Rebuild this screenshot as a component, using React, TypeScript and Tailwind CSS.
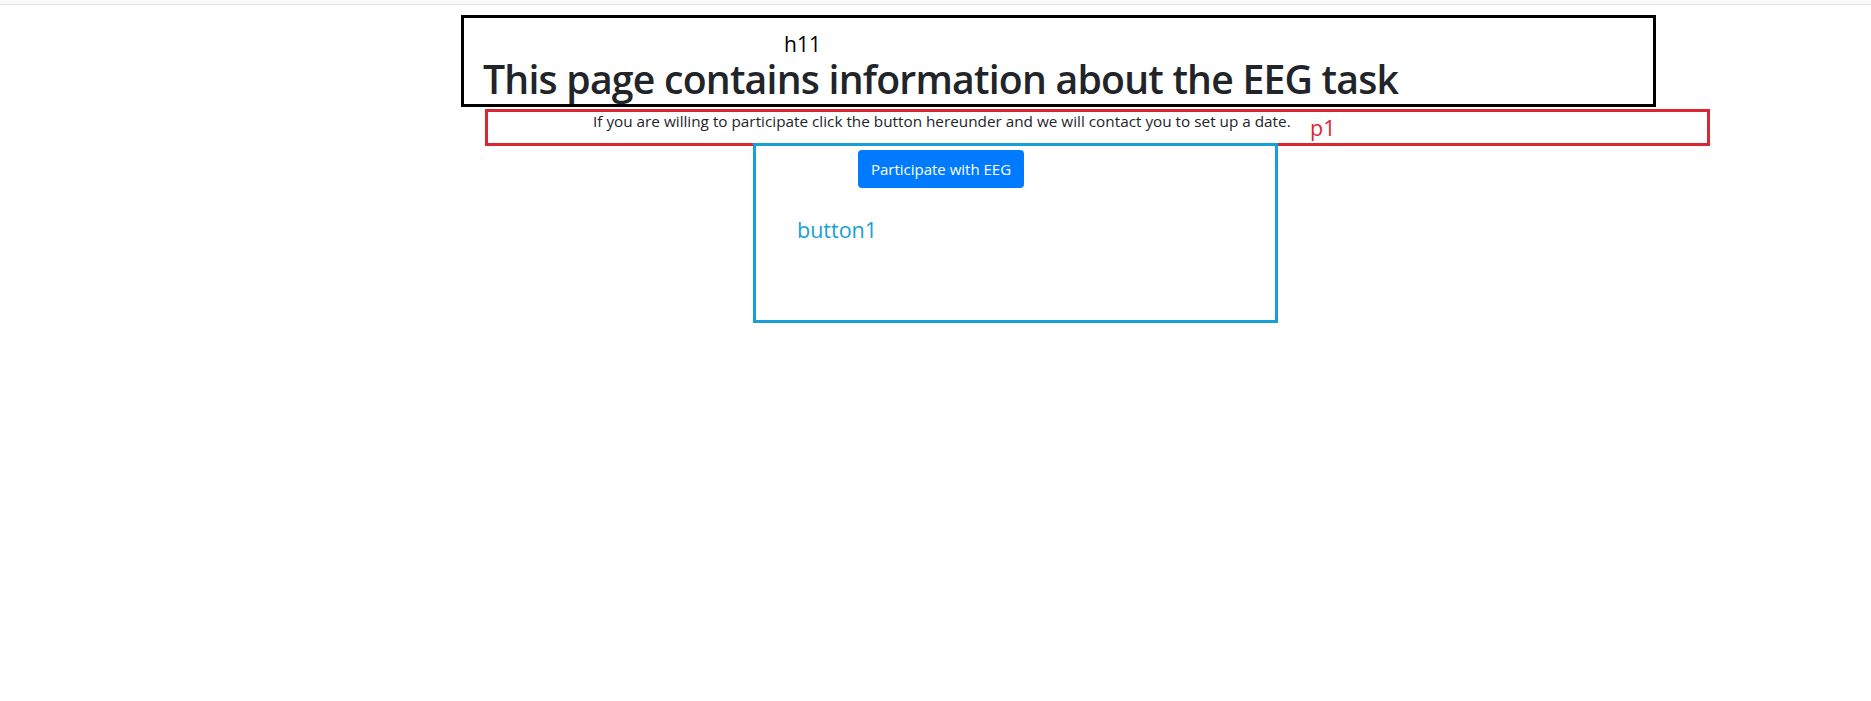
export default function App(): JSX.Element {
  return (
    <div className="min-h-screen bg-white font-['Open_Sans',_'Noto_Sans',_sans-serif] text-[#212529]">
      {/* browser-ish top strip */}
      <div className="h-[5px] bg-[#f8f9fa] border-b border-[#e4e6e8]"></div>

      {/* h11 annotation */}
      <div className="ml-[461px] mt-[10px] w-[1195px] h-[92px] border-[3px] border-black pt-[15px]">
        <div className="pl-[320px] text-[21px] leading-[22px] text-black">h11</div>
        <h1 className="mt-[4px] pl-[19px] text-[39.2px] leading-[40px] font-semibold tracking-[-0.02em] whitespace-nowrap">
          This page contains information about the EEG task
        </h1>
      </div>

      {/* p1 annotation */}
      <div className="ml-[485px] mt-[2px] w-[1225px] h-[37px] border-[3px] border-[#dc2733] flex">
        <p className="w-[822px] pl-[105px] text-[15.3px] leading-[18px] whitespace-nowrap">
          If you are willing to participate click the button hereunder and we will contact you to set up a date.
        </p>
        <span className="mt-[4px] text-[21.5px] leading-[24px] text-[#dc2733]">p1</span>
      </div>

      {/* button1 annotation */}
      <div className="relative z-10 ml-[753px] -mt-[3px] w-[525px] h-[180px] border-[3px] border-[#17a0d8]">
        <button className="ml-[102px] mt-[4px] w-[166px] h-[38px] rounded-[4px] bg-[#007bff] text-white text-[15px] leading-[24px]">
          Participate with EEG
        </button>
        <div className="ml-[41px] mt-[30px] text-[21.5px] leading-[24px] text-[#17a0d8]">button1</div>
      </div>
    </div>
  );
}
